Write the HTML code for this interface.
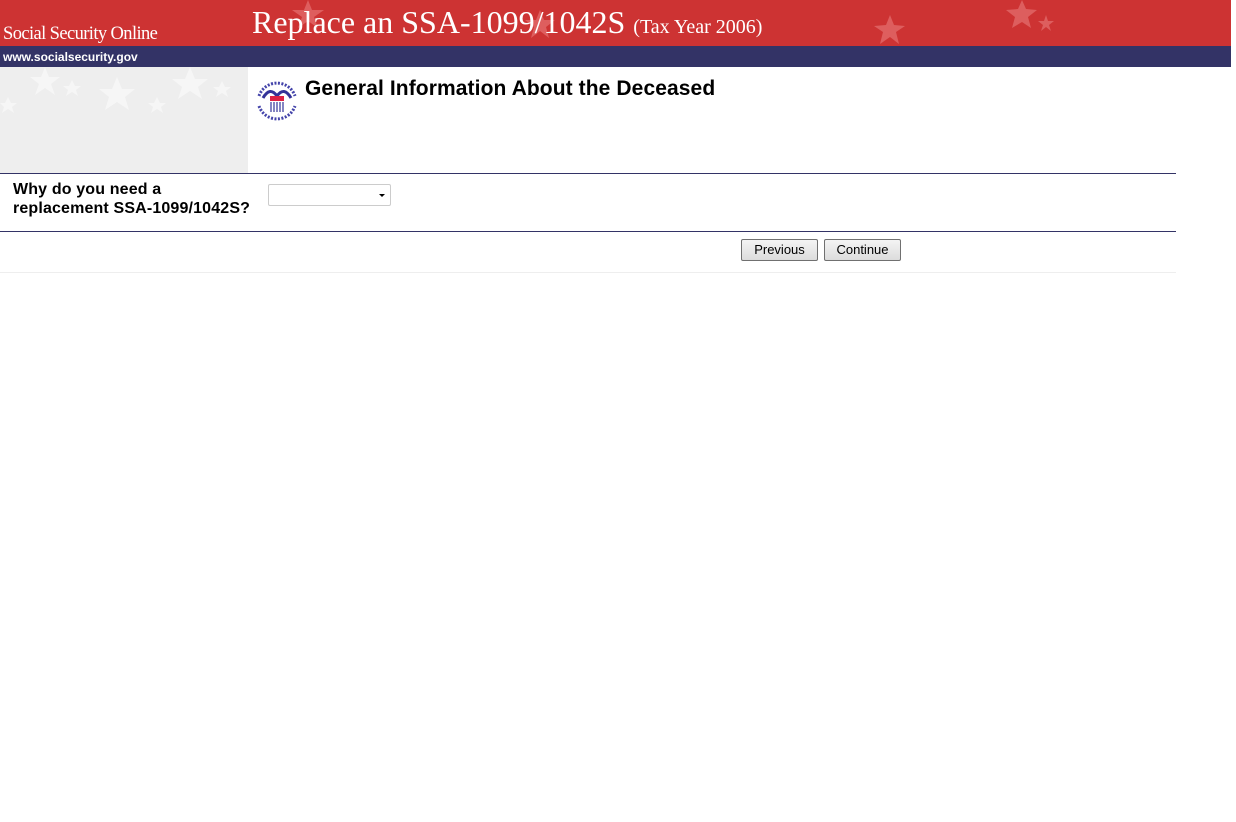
<!DOCTYPE html>
<html><head><meta charset="utf-8"><style>
body{margin:0;background:#fff;font-family:"Liberation Sans",Arial,sans-serif;width:1236px;height:822px;overflow:hidden;position:relative}
.abs{position:absolute}
</style></head><body>
<div class="abs" style="left:0;top:0;width:1231px;height:46px;background:#cd3333;overflow:hidden">
<svg class="abs" style="left:0;top:0" width="1231" height="46">
<g fill="#e06666" opacity="0.85">
<polygon points="308,0 312,10 324,10 314,17 318,28 308,21 298,28 302,17 292,10 304,10"/>
<polygon points="890,15 894,25 905,26 896,32 899,44 890,37 880,44 883,32 874,26 886,25"/>
<polygon points="1022,0 1026,9 1037,10 1028,17 1031,28 1022,22 1012,28 1015,17 1006,10 1018,9"/>
<polygon points="1046,15 1048,21 1054,21 1049,25 1051,31 1046,27 1041,31 1043,25 1038,21 1044,21"/>
<polygon points="540,10 544,20 555,20 546,27 549,38 540,31 531,38 534,27 525,20 536,20"/>
</g></svg>
<div class="abs" style="left:3px;top:24px;color:#fff;font-family:'Liberation Serif',serif;font-size:18.5px;letter-spacing:-0.6px">Social Security Online</div>
<div class="abs" style="left:252px;top:4px;color:#fff;font-family:'Liberation Serif',serif;font-size:32px;white-space:nowrap">Replace an SSA-1099/1042S <span style="font-size:20px">(Tax Year 2006)</span></div>
</div>
<div class="abs" style="left:0;top:46px;width:1231px;height:21px;background:#333366"></div>
<div class="abs" style="left:3px;top:50px;color:#fff;font-size:12px;font-weight:bold">www.socialsecurity.gov</div>
<div class="abs" style="left:0;top:67px;width:248px;height:106px;background:#eeeeee;overflow:hidden">
<svg width="248" height="60"><g fill="#f6f6f6">
<polygon points="45,0 49,10 60,10 51,17 55,28 45,21 35,28 39,17 30,10 41,10"/>
<polygon points="117,10 122,22 135,22 125,30 129,43 117,35 105,43 109,30 99,22 112,22"/>
<polygon points="190,0 195,12 208,12 198,20 202,32 190,24 178,32 182,20 172,12 185,12"/>
<polygon points="72,13 75,19 81,19 76,23 78,29 72,25 66,29 68,23 63,19 69,19"/>
<polygon points="157,30 160,36 166,36 161,40 163,46 157,42 151,46 153,40 148,36 154,36"/>
<polygon points="222,14 225,20 231,20 226,24 228,30 222,26 216,30 218,24 213,20 219,20"/>
<polygon points="8,30 11,36 17,36 12,40 14,46 8,42 2,46 4,40 0,36 5,36"/>
</g></svg></div>
<svg class="abs" style="left:253px;top:76px" width="48" height="48">
<circle cx="24" cy="24" r="22" fill="#fff"/>
<path d="M6,20 A19,19 0 0 1 42,20" fill="none" stroke="#4444aa" stroke-width="3" stroke-dasharray="2 1.5"/>
<path d="M6,30 A19,19 0 0 0 42,30" fill="none" stroke="#4444aa" stroke-width="3" stroke-dasharray="2 1.5"/>
<path d="M10,22 Q17,10 24,20 Q31,10 38,22" fill="none" stroke="#333399" stroke-width="3"/>
<rect x="17" y="20" width="14" height="5" fill="#dd2244"/>
<g stroke="#333399" stroke-width="1.2"><line x1="18" y1="26" x2="18" y2="36"/><line x1="21" y1="26" x2="21" y2="36"/><line x1="24" y1="26" x2="24" y2="36"/><line x1="27" y1="26" x2="27" y2="36"/><line x1="30" y1="26" x2="30" y2="36"/></g>
</svg>
<div class="abs" style="left:305px;top:77px;font-size:21px;font-weight:bold;color:#000;letter-spacing:0.1px">General Information About the Deceased</div>
<div class="abs" style="left:0;top:173px;width:1176px;height:1px;background:#333366"></div>
<div class="abs" style="left:13px;top:180px;font-size:16px;font-weight:bold;line-height:19px;color:#000;letter-spacing:0.15px">Why do you need a<br>replacement SSA-1099/1042S?</div>
<div class="abs" style="left:268px;top:184px;width:121px;height:20px;border:1px solid #ccc;border-radius:2px;background:#fff"></div>
<div class="abs" style="left:379px;top:194px;width:0;height:0;border-left:3px solid transparent;border-right:3px solid transparent;border-top:3px solid #000"></div>
<div class="abs" style="left:0;top:231px;width:1176px;height:1px;background:#333366"></div>
<div class="abs" style="left:741px;top:239px;width:75px;height:20px;border:1px solid #707070;border-radius:2px;background:linear-gradient(#f4f4f4,#dcdcdc);font-size:13px;text-align:center;line-height:20px">Previous</div>
<div class="abs" style="left:824px;top:239px;width:75px;height:20px;border:1px solid #707070;border-radius:2px;background:linear-gradient(#f4f4f4,#dcdcdc);font-size:13px;text-align:center;line-height:20px">Continue</div>
<div class="abs" style="left:0;top:272px;width:1176px;height:1px;background:#eeeeee"></div>
</body></html>
